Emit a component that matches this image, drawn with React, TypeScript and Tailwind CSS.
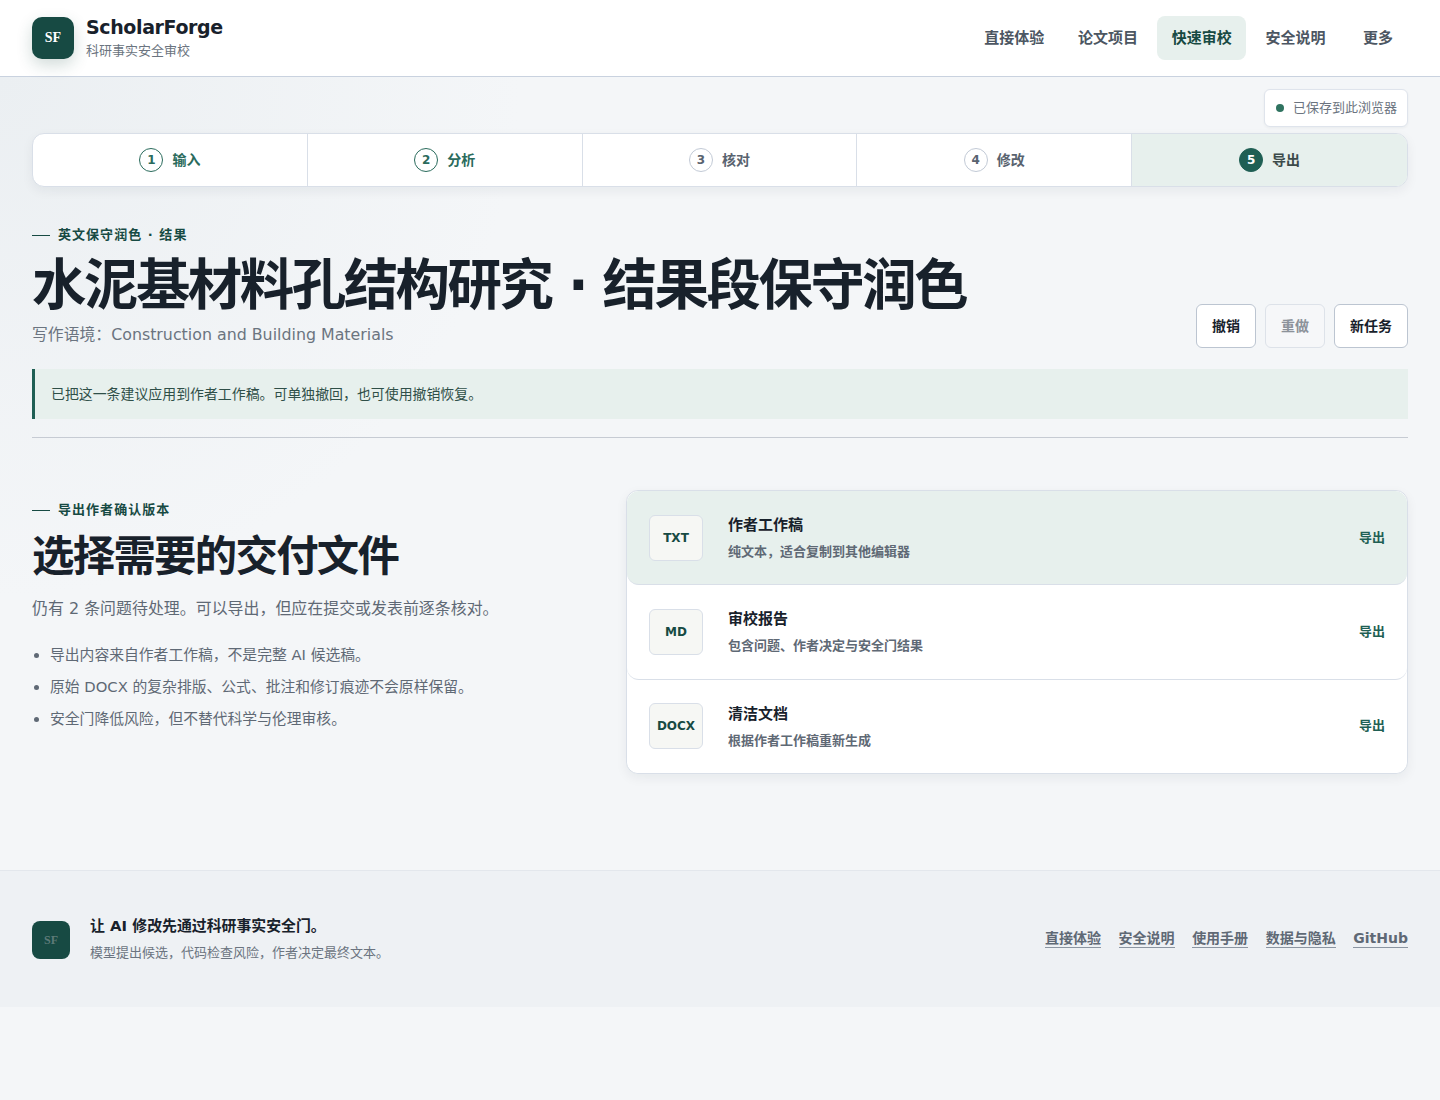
import React from 'react';

const navItems = ['直接体验', '论文项目', '快速审校', '安全说明', '更多'];
const steps = ['输入', '分析', '核对', '修改', '导出'];
const exportsList = [
  { ext: 'TXT', title: '作者工作稿', desc: '纯文本\uFF0C适合复制到其他编辑器', height: 'h-[94px]' },
  { ext: 'MD', title: '审校报告', desc: '包含问题、作者决定与安全门结果', height: 'h-[95px] pb-[1px]' },
  { ext: 'DOCX', title: '清洁文档', desc: '根据作者工作稿重新生成', height: 'h-[93px] pb-[1px]' }
];
const notes = [
  '导出内容来自作者工作稿\uFF0C不是完整 AI 候选稿。',
  '原始 DOCX 的复杂排版、公式、批注和修订痕迹不会原样保留。',
  '安全门降低风险\uFF0C但不替代科学与伦理审核。'
];
const footerLinks = ['直接体验', '安全说明', '使用手册', '数据与隐私', 'GitHub'];

const Eyebrow: React.FC<{ text: string }> = ({ text }) => (
  <div className="flex items-center gap-2 text-[13px] leading-5 font-bold tracking-[0.08em] text-[#174a43]">
    <span className="h-px w-[18px] bg-[#174a43]" />
    <span>{text}</span>
  </div>
);

const Header = () => (
  <header className="flex h-[77px] items-center justify-between border-b border-[#c9d2df] bg-white px-8">
    <div className="flex items-center gap-3">
      <div className="flex h-[42px] w-[42px] items-center justify-center rounded-[10px] bg-[#174a43] font-['Liberation_Serif',serif] text-sm font-bold text-white shadow-[0_6px_16px_rgba(23,74,67,0.2)]">
        SF
      </div>
      <div>
        <div className="text-[19px] leading-[22px] font-bold tracking-[-0.02em] text-[#18212b]">ScholarForge</div>
        <div className="mt-[3px] text-[13px] leading-5 text-[#6b7480]">科研事实安全审校</div>
      </div>
    </div>
    <nav className="flex items-center gap-[5px]">
      {navItems.map(item => (
        <a
          key={item}
          className={
            item === '快速审校'
              ? 'rounded-lg bg-[#e7f0ed] px-[14.4px] py-[11px] text-[15px] leading-[22px] font-semibold text-[#174a43]'
              : item === '更多'
                ? 'pt-[11px] pr-[15px] pb-[11px] pl-[18px] text-[15px] leading-[22px] font-semibold text-[#4c5662]'
                : 'px-[14.4px] py-[11px] text-[15px] leading-[22px] font-semibold text-[#4c5662]'
          }
        >
          {item}
        </a>
      ))}
    </nav>
  </header>
);

const Stepper = () => (
  <div className="mt-[6px] grid grid-cols-5 overflow-hidden rounded-xl border border-[#d9dfe8] bg-white shadow-[0_4px_12px_rgba(24,33,43,0.06)]">
    {steps.map((step, i) => {
      const active = i === 4;
      const done = i < 2;
      return (
        <div
          key={step}
          className={`flex h-[52px] items-center justify-center gap-[9px] border-r border-[#d9dfe8] text-sm font-semibold last:border-r-0 ${
            active ? 'bg-[#e7f0ed] text-[#3c4a4a]' : done ? 'text-[#2a6b5c]' : 'text-[#59636f]'
          }`}
        >
          <span
            className={`flex h-6 w-6 items-center justify-center rounded-full border text-xs font-bold ${
              active
                ? 'border-[#1f5f54] bg-[#1f5f54] text-white'
                : done
                  ? 'border-[#2a6b5c] bg-white'
                  : 'border-[#c2cad6] bg-white'
            }`}
          >
            {i + 1}
          </span>
          <span>{step}</span>
        </div>
      );
    })}
  </div>
);

const ExportRow: React.FC<{ ext: string; title: string; desc: string; height: string; index: number }> = ({
  ext,
  title,
  desc,
  height,
  index
}) => (
  <div
    className={`flex items-center rounded-xl border-b border-[#d9dfe8] px-[22px] last:border-b-0 ${height} ${
      index === 0 ? 'bg-[#e7f0ed]' : 'bg-white'
    }`}
  >
    <div className="flex h-[46px] w-[54px] shrink-0 items-center justify-center rounded-md border border-[#d9dfe8] bg-[#f6f7f4] text-xs font-bold text-[#174a43]">
      {ext}
    </div>
    <div className="ml-[25px] flex-1">
      <div className="text-[15px] leading-[22px] font-bold text-[#18212b]">{title}</div>
      <div className="mt-[7px] text-[13px] leading-[18px] font-semibold text-[#5f6975]">{desc}</div>
    </div>
    <span className="text-[13px] font-bold text-[#1f5f54]">导出</span>
  </div>
);

export default function App() {
  return (
    <div className="min-h-[1100px] bg-[#f4f6f8] font-['DejaVu_Sans','Noto_Sans_CJK_SC',sans-serif]">
      <Header />
      <main className="bg-[radial-gradient(circle_at_0%_0%,#ebeff2_0,#f4f6f8_520px)] px-8 pb-[96px]">
        <div className="flex justify-end pt-3">
          <div className="flex h-[38px] items-center gap-[9px] rounded-md border border-[#dfe4ec] bg-white pr-[10px] pl-[11px] text-[13px] text-[#6b7480] shadow-[0_1px_3px_rgba(24,33,43,0.05)]">
            <span className="h-2 w-2 rounded-full bg-[#2f7360]" />
            已保存到此浏览器
          </div>
        </div>
        <Stepper />

        <section className="mt-[38px] flex items-end justify-between">
          <div>
            <Eyebrow text="英文保守润色 · 结果" />
            <h1 className="mt-[7px] text-[54.4px] leading-[68px] font-bold tracking-[-0.045em] text-[#18212b]">
              水泥基材料孔结构研究 · 结果段保守润色
            </h1>
            <p className="mt-[3px] text-[15.84px] leading-6 text-[#6b7480]">{'写作语境\uFF1AConstruction and Building Materials'}</p>
          </div>
          <div className="mb-[-1px] flex gap-[9px]">
            <button className="h-11 rounded-md border border-[#bcc5d1] bg-white px-[15px] text-sm font-bold text-[#18212b]">撤销</button>
            <button className="h-11 rounded-md border border-[#dde2e9] bg-[#f6f7f9] px-[15px] text-sm font-bold text-[#8c929a]">重做</button>
            <button className="h-11 rounded-md border border-[#bcc5d1] bg-white px-[15px] text-sm font-bold text-[#18212b]">新任务</button>
          </div>
        </section>

        <div className="mt-[22px] flex h-[50px] items-center border-l-[3px] border-[#1f5f54] bg-[#e7f0ed] pl-4 text-[13.92px] text-[#2f4f48]">
          {'已把这一条建议应用到作者工作稿。可单独撤回\uFF0C也可使用撤销恢复。'}
        </div>
        <div className="mt-[18px] h-px bg-[#c6cbd3]" />

        <section className="mt-[52px] grid grid-cols-[570px_1fr] gap-6">
          <div className="pt-[10px]">
            <Eyebrow text="导出作者确认版本" />
            <h2 className="mt-[9px] text-[42.4px] leading-[56px] font-bold tracking-[-0.04em] text-[#18212b]">
              选择需要的交付文件
            </h2>
            <p className="mt-[10px] text-[15.95px] leading-7 text-[#5f6975]">{'仍有 2 条问题待处理。可以导出\uFF0C但应在提交或发表前逐条核对。'}</p>
            <ul className="mt-[16px] list-disc pl-[18px] text-[14.8px] text-[#5f6975]">
              {notes.map(note => (
                <li key={note} className="h-8 leading-8">{note}</li>
              ))}
            </ul>
          </div>
          <div className="overflow-hidden rounded-xl border border-[#d9dfe8] bg-white shadow-[0_4px_12px_rgba(24,33,43,0.06)]">
            {exportsList.map((item, i) => (
              <ExportRow key={item.ext} index={i} {...item} />
            ))}
          </div>
        </section>
      </main>

      <footer className="flex h-[137px] items-center justify-between border-t border-[#e3e7ec] bg-[#eef1f4] px-8">
        <div className="flex items-center gap-5">
          <div className="mt-[2px] flex h-[38px] w-[38px] items-center justify-center rounded-lg bg-[#174a43] font-['Liberation_Serif',serif] text-xs font-bold text-[#5d7a78]">
            SF
          </div>
          <div className="mb-[2px]">
            <div className="text-[14.88px] leading-[22px] font-bold text-[#18212b]">让 AI 修改先通过科研事实安全门。</div>
            <div className="mt-[7px] text-[13px] leading-[18px] text-[#6b7480]">{'模型提出候选\uFF0C代码检查风险\uFF0C作者决定最终文本。'}</div>
          </div>
        </div>
        <div className="mb-[2px] flex gap-[17.6px]">
          {footerLinks.map(link => (
            <a key={link} className="border-b border-[#8b95a1] text-sm leading-[18px] font-semibold text-[#5f6975]">{link}</a>
          ))}
        </div>
      </footer>
    </div>
  );
}
